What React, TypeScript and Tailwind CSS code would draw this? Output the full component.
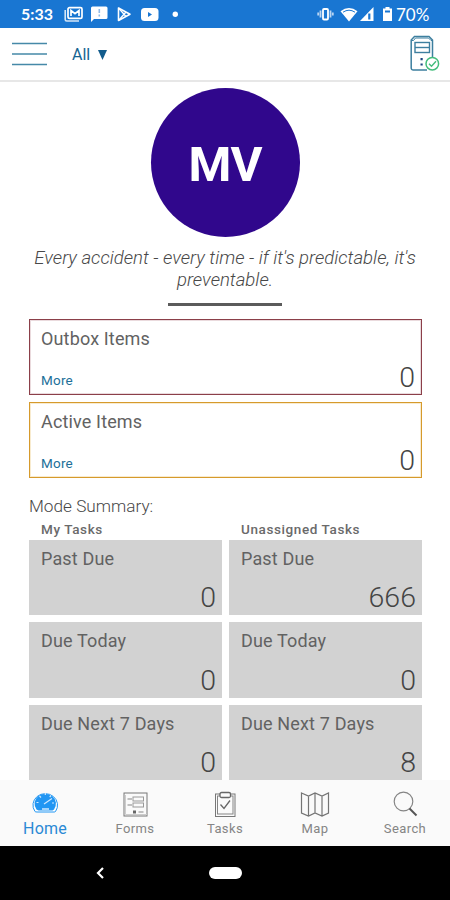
import type { ReactNode } from 'react';

type Task = { title: string; count: number };

const myTasks: Task[] = [
  { title: 'Past Due', count: 0 },
  { title: 'Due Today', count: 0 },
  { title: 'Due Next 7 Days', count: 0 },
];

const unassignedTasks: Task[] = [
  { title: 'Past Due', count: 666 },
  { title: 'Due Today', count: 0 },
  { title: 'Due Next 7 Days', count: 8 },
];

function StatusBar() {
  return (
    <div className="flex h-7 shrink-0 items-center justify-between bg-[#1976d2] pl-[21px] pr-5 text-white">
      <div className="flex items-center">
        <span className="w-[43px] font-[Lato,sans-serif] text-[16px] leading-none font-bold">5:33</span>
        <svg width="120" height="18" viewBox="0 0 120 18" fill="none">
          {/* mail */}
          <path d="M1.2 5v9.5a1.5 1.5 0 0 0 1.5 1.5H15" stroke="#d5e6f7" strokeWidth="1.6" />
          <rect x="4" y="2.6" width="14" height="10.8" rx="1.5" stroke="white" strokeWidth="1.7" />
          <path d="M7 11V5.5l4 3.2 4-3.2V11" stroke="white" strokeWidth="1.7" />
          {/* message */}
          <path d="M28.5 1.5h13.500a1.500 1.500 0 0 1 1.500 1.500v9.500a1.500 1.500 0 0 1-1.500 1.500H30L27 17V3A1.500 1.500 0 0 1 28.500 1.500z" fill="white" />
          <path d="M35.300 4v4M35.300 9.500v2" stroke="#8db9e8" strokeWidth="1.600" />
          {/* play store */}
          <path d="M54.500 3v12.500L66 9.200z" stroke="white" strokeWidth="1.600" strokeLinejoin="round" />
          <path d="M54.500 3l7.500 8.500M54.500 15.500L62 7" stroke="white" strokeWidth="1.300" />
          {/* video */}
          <rect x="77" y="3" width="17.500" height="13" rx="3.500" fill="white" />
          <path d="M84 7v5l4-2.500z" fill="#1976d2" />
          <circle cx="111.300" cy="9.300" r="2.700" fill="white" />
        </svg>
      </div>
      <div className="flex items-center">
        <svg width="79" height="18" viewBox="0 0 79 18" fill="none">
          <rect x="8" y="4" width="5" height="10.500" rx="1" stroke="white" strokeWidth="1.800" />
          <path d="M5.500 5.500v7M15.500 5.500v7M3.200 7.500v3M17.800 7.500v3" stroke="#b9d5f2" strokeWidth="1.800" />
          <path d="M25.500 6.300q8.500-6.600 17 0L34 16.500z" fill="white" />
          <path d="M28 7.200q6-4 12 0" stroke="#1976d2" strokeWidth="1" />
          <path d="M45 16L58.500 2v14z" fill="white" />
          <path d="M54.300 8.500v6" stroke="#1976d2" strokeWidth="2.200" />
          <path d="M68 3.500h2.500V2h4v1.500H77V16h-9z" fill="white" />
          <path d="M70 5.500h5v2h-5z" fill="#1976d2" />
        </svg>
        <span className="ml-0.5 w-[34px] whitespace-nowrap pt-px font-[Lato,sans-serif] text-[17px] leading-none">70%</span>
      </div>
    </div>
  );
}

function Header() {
  return (
    <header className="flex h-[54px] shrink-0 items-center border-b-2 border-[#e7e7e7] bg-white pl-3 pr-2.5">
      <svg width="35" height="24" viewBox="0 0 35 24" stroke="#4689a8" strokeWidth="1.700">
        <path d="M0 1.500h35M0 12h35M0 22.500h35" />
      </svg>
      <div className="ml-[25px] flex items-center gap-2 pt-0.5 text-[#146491]">
        <span className="text-[16px] leading-none">All</span>
        <svg width="9" height="10" viewBox="0 0 9 10">
          <path d="M0 0h9L4.500 10z" fill="#125c8c" />
        </svg>
      </div>
      <svg className="mb-0.5 ml-auto" width="31" height="38" viewBox="0 0 31 38" fill="none">
        <path d="M18 36H4.200A2 2 0 0 1 2.200 34V6l3.300-3.500h14.500L23.500 6v17" stroke="#3d7f9f" strokeWidth="1.500" />
        <path d="M2.500 6.500h2l2-2.500h13l2.500 2.500h1.500" stroke="#3d7f9f" />
        <rect x="6" y="8.500" width="14.500" height="10" stroke="#3d7f9f" strokeWidth="1.400" />
        <path d="M6 13.500h14.500" stroke="#3d7f9f" strokeWidth="1.400" />
        <path d="M11.500 25.200h2.200M11.500 30.500h2.200" stroke="#1c4680" strokeWidth="2.200" />
        <circle cx="23.300" cy="29.700" r="6.300" fill="white" stroke="#43bd7c" strokeWidth="1.500" />
        <path d="M20 29.800l2.500 2.500 4.500-5" stroke="#43bd7c" strokeWidth="1.400" />
      </svg>
    </header>
  );
}

function ItemCard({ title, className }: { title: string; className: string }) {
  return (
    <div className={`flex h-[76px] justify-between border pl-[11px] pr-1.5 ${className}`}>
      <div className="flex flex-col">
        <span className="mt-2 text-[18px] leading-[22px] tracking-[0.15px]">{title}</span>
        <a className="mt-[22px] text-[13.500px] leading-4 tracking-[0.2px] text-[#1d7099]">More</a>
      </div>
      <span className="mt-[41px] text-[28.500px] leading-[34px] font-light text-[#444]">0</span>
    </div>
  );
}

function TaskColumn({ title, tasks }: { title: string; tasks: Task[] }) {
  return (
    <div className="w-[193px]">
      <div className="h-[22px] pl-3 pt-[3px] text-[13.500px] leading-4 font-medium tracking-[0.6px] text-[#6a6a6a]">{title}</div>
      <div className="flex flex-col gap-[7px]">
        {tasks.map((task) => (
          <div key={task.title} className="flex h-[75.5px] flex-col justify-between bg-[#d2d2d2] pl-3 pr-1.5">
            <span className="mt-2 text-[18px] leading-[22px] tracking-[0.15px]">{task.title}</span>
            <span className="self-end text-[28.500px] leading-[34px] font-light text-[#444]">{task.count}</span>
          </div>
        ))}
      </div>
    </div>
  );
}

function NavItem({ label, active, children }: { label: string; active?: boolean; children: ReactNode }) {
  return (
    <div className={`flex w-[90px] flex-col items-center pt-[9px] ${active ? 'text-[#2a89d5]' : 'text-[#858585]'}`}>
      <svg width="30" height="30" viewBox="0 0 30 30" fill="none" stroke="currentColor">
        {children}
      </svg>
      <span className={active ? 'pt-px text-[16px] leading-[18px] tracking-[0.2px]' : 'pt-px text-[13px] leading-[18px] tracking-[0.4px]'}>
        {label}
      </span>
    </div>
  );
}

function BottomNav() {
  return (
    <nav className="flex h-[66px] shrink-0 bg-[#fafafa]">
      <NavItem label="Home" active>
        <path d="M5 22.500A12.300 11.500 0 1 1 25.500 22.500Q25 23 24 23H7Q5.500 23 5 22.500z" fill="white" stroke="#2196f3" />
        <path d="M6.500 20.500A10.700 10 0 1 1 24 20.500l-1.500 1h-14z" fill="#2196f3" stroke="none" />
        <path d="M14 15l8-5.500M6.500 13.500h2M22 14h2M9.500 7l1.500 1.500M15.300 4V6M21 6.500l-1.300 1.500" stroke="#cfe8ff" strokeWidth="1.200" />
        <path d="M12 20h7" stroke="#cfe8ff" strokeWidth="1.500" />
      </NavItem>
      <NavItem label="Forms">
        <rect x="4" y="4" width="23" height="23" stroke="#777" />
        <path d="M5.500 6v19.500H27" stroke="#ccc" />
        <rect x="13" y="8" width="10.500" height="4" stroke="#999" />
        <rect x="13" y="14" width="10.500" height="4" stroke="#999" />
        <path d="M7.500 10H12M7.500 16H12M18.500 23h5" />
        <path d="M13 23h3" stroke="#666" strokeWidth="3" />
      </NavItem>
      <NavItem label="Tasks">
        <rect x="5.500" y="5" width="19.500" height="22.500" stroke="#777" />
        <rect x="7.500" y="7" width="15.500" height="18" />
        <rect x="10" y="3.500" width="10.500" height="5" rx="1.500" fill="#fafafa" stroke="#666" strokeWidth="1.300" />
        <path d="M10.500 15.500l3.500 4 6-8" stroke="#666" strokeWidth="1.300" />
      </NavItem>
      <NavItem label="Map">
        <path d="M1.500 4l7 3 6.500-3 7 3 6.500-3v20l-6.500 3-7-3-6.500 3-7-3zM8.500 7v20M15 4v20M22 7v20" stroke="#747474" strokeWidth="1.200" />
      </NavItem>
      <NavItem label="Search">
        <circle cx="13.500" cy="12.500" r="9.300" strokeWidth="1.200" />
        <path d="M19.500 19.500l7 7" stroke="#555" strokeWidth="2" />
      </NavItem>
    </nav>
  );
}

export default function App() {
  return (
    <div className="flex h-[900px] w-[450px] flex-col overflow-hidden bg-white font-[Roboto,sans-serif] text-[#626262]">
      <StatusBar />
      <Header />
      <main className="flex min-h-0 flex-1 flex-col overflow-hidden px-[29px] pt-1.5">
        <div className="flex size-[149px] shrink-0 items-center justify-center self-center rounded-full bg-[#30078c]">
          <span className="pt-[3px] text-[49px] leading-none font-bold tracking-[-1px] text-white">MV</span>
        </div>
        <p className="-mx-2 mt-[10px] text-center text-[18.600px] leading-[22px] font-light italic text-[#484848]">
          Every accident - every time - if it's predictable, it's
          <br />
          preventable.
        </p>
        <div className="mt-3 h-[3px] w-[114px] shrink-0 self-center bg-[#5b5b5b]" />
        <div className="mt-[13px] flex w-[393px] flex-col gap-[6.500px]">
          <ItemCard title="Outbox Items" className="border-[#8b3f49] shadow-[inset_0_0_0_1px_#eadadd]" />
          <ItemCard title="Active Items" className="border-[#d69a2c] shadow-[inset_0_0_0_1px_#f8ebcf]" />
        </div>
        <h2 className="mt-[17px] mb-px text-[17.200px] leading-[22px] font-light text-[#484848]">Mode Summary:</h2>
        <div className="flex w-[393px] justify-between">
          <TaskColumn title="My Tasks" tasks={myTasks} />
          <TaskColumn title="Unassigned Tasks" tasks={unassignedTasks} />
        </div>
      </main>
      <BottomNav />
      <div className="flex h-[54px] shrink-0 items-center bg-black pl-24">
        <svg width="8" height="12" viewBox="0 0 8 12" fill="none" stroke="white" strokeWidth="2.200">
          <path d="M7 1L2 6l5 5" />
        </svg>
        <div className="ml-[105px] h-3 w-[33px] rounded-full bg-white" />
      </div>
    </div>
  );
}
